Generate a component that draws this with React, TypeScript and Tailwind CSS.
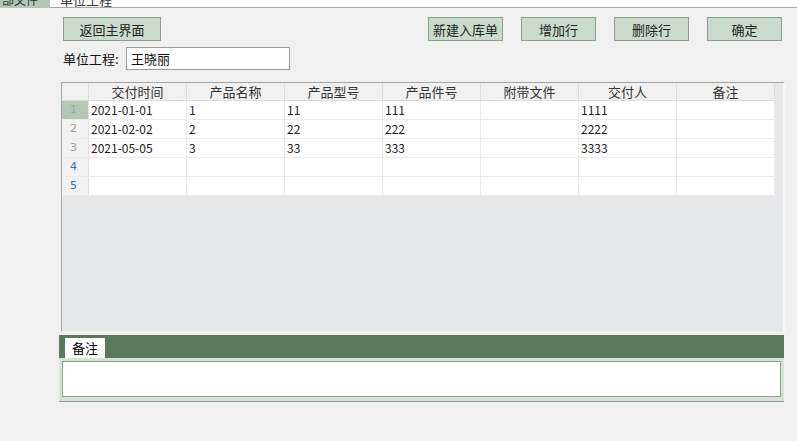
import React from 'react';

const cols = ['交付时间', '产品名称', '产品型号', '产品件号', '附带文件', '交付人', '备注'];
const rows: string[][] = [
  ['2021-01-01', '1', '11', '111', '', '1111', ''],
  ['2021-02-02', '2', '22', '222', '', '2222', ''],
  ['2021-05-05', '3', '33', '333', '', '3333', ''],
  ['', '', '', '', '', '', ''],
  ['', '', '', '', '', '', ''],
];

const font = { fontFamily: '"SimSun", "Noto Sans CJK SC", sans-serif' };

function Btn({ label, className = '' }: { label: string; className?: string }) {
  return (
    <button className={`h-[24px] w-[75px] bg-[#cadbcb] border border-[#8d9c8e] text-[13px] text-[#222] leading-none ${className}`}>
      {label}
    </button>
  );
}

export default function App() {
  return (
    <div className="w-[797px] h-[441px] bg-[#f0f0f0] overflow-hidden text-[#111]" style={font}>
      {/* clipped tab strip */}
      <div className="flex h-[8px]">
        <div className="w-[50px] bg-[#b4c6b4] overflow-hidden">
          <div className="text-[12px] leading-[12px] -mt-[6px] pl-[2px] text-[#333]">部文件</div>
        </div>
        <div className="flex-1 bg-white border-b border-[#a8a8a8] overflow-hidden">
          <div className="text-[13px] leading-[12px] -mt-[6px] pl-[10px] text-[#333]">单位工程</div>
        </div>
      </div>

      {/* buttons */}
      <div className="flex items-start pt-[9px] pl-[63px]">
        <Btn label="返回主界面" className="w-[98px]" />
        <div className="flex gap-[18px] ml-[267px]">
          <Btn label="新建入库单" />
          <Btn label="增加行" />
          <Btn label="删除行" />
          <Btn label="确定" />
        </div>
      </div>

      {/* unit */}
      <div className="flex items-center pl-[63px] mt-[6px] h-[23px]">
        <span className="text-[13px] w-[63px] shrink-0 whitespace-nowrap">单位工程:</span>
        <div className="w-[164px] h-[23px] bg-white border border-[#9a9a9a] flex items-center pl-[4px] text-[13px]">王晓丽</div>
      </div>

      {/* table */}
      <div className="ml-[61px] mt-[12px] w-[724px] h-[249px] bg-[#e6e7e9] border-l border-t border-[#a5a5a5] border-r-2 border-r-[#f8f8f8]">
        <div className="flex h-[18px] bg-[#f0f0f0] w-[713px] border-b border-[#dcdcdc]">
          <div className="w-[27px] border-r border-[#dcdcdc]" />
          {cols.map((c) => (
            <div key={c} className="w-[98px] border-r border-[#dcdcdc] flex items-center justify-center text-[13px] text-[#333]">
              {c}
            </div>
          ))}
        </div>
        {rows.map((r, i) => (
          <div key={i} className="flex h-[19px] w-[713px] border-b border-[#ebebeb]">
            <div
              className={`w-[27px] border-r border-[#e0e0e0] flex items-center pl-[8px] text-[11px] ${
                i === 0 ? 'bg-[#b5c8b6]' : 'bg-[#f2f2f2]'
              } ${i < 3 ? 'text-[#a0a0a0]' : 'text-[#3c6ea8]'}`}
              style={{ fontFamily: 'Tahoma, "DejaVu Sans", sans-serif' }}
            >
              {i + 1}
            </div>
            {r.map((v, j) => (
              <div key={j} className="w-[98px] bg-white border-r border-[#ebebeb] flex items-center pl-[2px] text-[12px] text-[#222]">
                {v}
              </div>
            ))}
          </div>
        ))}
      </div>

      {/* notes panel */}
      <div className="ml-[59px] mt-[4px] w-[725px]">
        <div className="h-[23px] bg-[#5b7a5b] flex items-end pl-[6px]">
          <div className="w-[40px] h-[20px] bg-white flex items-center justify-center text-[13px] text-black">备注</div>
        </div>
        <div className="h-[44px] bg-[#d6e3d6] border-b border-[#8f9d8f] pt-[3px] px-[3px]">
          <div className="h-[36px] bg-white border border-[#8f9d8f]" />
        </div>
      </div>
    </div>
  );
}
